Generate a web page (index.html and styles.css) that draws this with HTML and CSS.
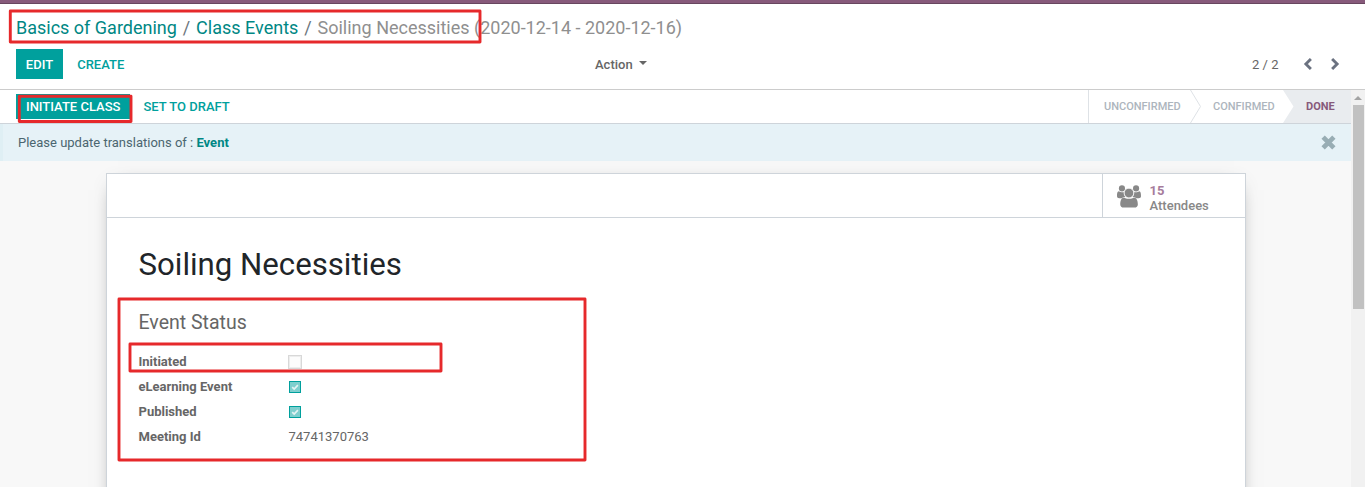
FILE: index.html
```html
<!DOCTYPE html>
<html lang="en">
<head>
<meta charset="utf-8">
<title>Soiling Necessities</title>
<link rel="stylesheet" href="styles.css">
</head>
<body>
<div class="app">
  <div class="navbar"></div>
  <header class="control-panel">
    <nav class="breadcrumb"><a>Basics of Gardening</a><span class="sep">/</span><a>Class Events</a><span class="sep">/</span><span class="current">Soiling Necessities (2020-12-14 - 2020-12-16)</span></nav>
    <div class="toolbar">
      <div class="toolbar-left"><button class="btn primary edit">EDIT</button><button class="btn link create">CREATE</button></div>
      <div class="action">Action<i class="caret"></i></div>
      <div class="pager">
        <span class="count">2 / 2</span>
        <svg class="chev" viewBox="0 0 10 12"><path d="M7.900 1 2.900 6l5 5" /></svg>
        <svg class="chev" viewBox="0 0 10 12"><path d="M2.100 1l5 5-5 5" /></svg>
      </div>
    </div>
  </header>
  <div class="content">
    <main class="form">
      <div class="statusbar">
        <div class="status-buttons"><button class="btn primary initiate">INITIATE CLASS</button><button class="btn link draft">SET TO DRAFT</button></div>
        <div class="steps">
          <div class="step first">UNCONFIRMED</div>
          <svg class="arrow" viewBox="0 0 11 33"><path class="line" d="M.5 0 10.500 16.500.5 33"/></svg>
          <div class="step second">CONFIRMED</div>
          <svg class="arrow" viewBox="0 0 11 33"><path class="fill" d="M0 0H11V33H0L10.500 16.500Z"/></svg>
          <div class="step done">DONE</div>
        </div>
      </div>
      <div class="alert"><span>Please update translations of : <b>Event</b></span>
        <svg class="close" viewBox="0 0 14 14"><path d="M2 2l10 10M12 2 2 12"/></svg>
      </div>
      <div class="sheet-bg">
        <section class="sheet">
          <div class="button-box">
            <div class="stat">
              <svg class="users" viewBox="0 0 24.300 23"><circle cx="5" cy="3.300" r="3.100"/><circle cx="19.300" cy="3.300" r="3.100"/><path d="M1.900 6.200C2.800 6.900 4 7.400 5.300 7.300c.6 0 1.100-.1 1.600-.3 0 1.800.6 3.500 1.400 4.900-1.300 0-2.600.4-3.500 1.300H2.300C.9 13.200 0 12.500 0 11.200 0 9.300.2 6.200 1.900 6.200ZM22.400 6.200c-.9.7-2.100 1.200-3.400 1.100-.6 0-1.100-.1-1.600-.3 0 1.800-.6 3.500-1.400 4.900 1.300 0 2.600.4 3.500 1.300H22c1.400 0 2.300-.7 2.300-2 0-1.900-.2-5-1.900-5Z"/><circle class="front" cx="12.100" cy="8" r="4.900"/><path d="M7.200 12.400c1 .8 2.500 1.500 4.900 1.500s4-.7 4.900-1.500c3.300 0 4.100 4.100 4.100 7.100 0 2.100-1.400 3.200-3.500 3.200H6.800c-2.200 0-3.500-1.100-3.500-3.200 0-3 .7-7.100 3.900-7.100Z"/></svg>
              <div class="stat-text"><span class="value">15</span><span>Attendees</span></div>
            </div>
          </div>
          <h1>Soiling Necessities</h1>
          <h2>Event Status</h2>
          <div class="fields">
            <label>Initiated</label><i class="check empty"></i>
            <label>eLearning Event</label><i class="check"><svg viewBox="0 0 10 10"><path d="M2.200 5.200 4.200 7.100 7.900 3.200"/></svg></i>
            <label>Published</label><i class="check"><svg viewBox="0 0 10 10"><path d="M2.200 5.200 4.200 7.100 7.900 3.200"/></svg></i>
            <label>Meeting Id</label><span>74741370763</span>
          </div>
        </section>
      </div>
    </main>
    <div class="scrollbar"><i class="up"></i><div class="thumb"></div></div>
  </div>
  <svg class="marks" viewBox="0 0 1365 487">
    <rect x="10.300" y="11" width="469.700" height="31"/>
    <rect x="19.300" y="96.300" width="111.700" height="25.200"/>
    <rect x="119" y="299" width="466" height="161"/>
    <rect x="130" y="344" width="311" height="27"/>
  </svg>
</div>
</body>
</html>
```
FILE: styles.css
```css
* { box-sizing: border-box; }
body { margin: 0; font: 13px/20px Roboto, sans-serif; color: #666; overflow: hidden; }
.app { position: relative; height: 487px; display: flex; flex-direction: column; background: #fff; overflow: hidden; }
.navbar { height: 4px; flex: none; background: #875a7b; border-bottom: 1px solid #68465f; }
.control-panel { height: 86px; flex: none; border-bottom: 1px solid #ccc; padding: 10px 16px 0; }
.breadcrumb { font-size: 18px; line-height: 27px; height: 27px; white-space: nowrap; }
.breadcrumb a { color: #008784; }
.sep { padding: 0 5.9px; color: #6c757d; }
.current { color: #8f8f8f; }
.toolbar { display: flex; align-items: center; height: 30px; margin-top: 8px; }
.toolbar-left { flex: 0 0 579px; display: flex; }
.btn { border: 0; margin: 0; font: 500 13px/20px Roboto, sans-serif; white-space: nowrap; text-align: center; }
.primary { background: #00a09d; color: #fff; }
.link { background: none; color: #00a09d; }
.edit { width: 47px; height: 30px; padding: 2px 0 0; }
.create { padding: 2px 0 0; margin-left: 14.2px; }
.action { flex: 1; display: flex; align-items: center; font-weight: 500; padding-top: 2px; }
.caret { border: 4px solid transparent; border-top-color: #666; border-bottom: 0; margin: -4px 0 0 6px; }
.pager { display: flex; align-items: center; margin-right: 9px; }
.count { margin-right: 24.5px; padding-top: 2px; }
.chev { width: 10px; height: 12px; fill: none; stroke: #6b7280; stroke-width: 2.9; }
.chev + .chev { margin-left: 17px; }
.content { flex: 1; display: flex; min-height: 0; }
.form { flex: 1; min-width: 0; display: flex; flex-direction: column; }
.statusbar { height: 34px; flex: none; display: flex; justify-content: space-between; border-bottom: 1px solid #ced4da; padding-left: 16px; }
.status-buttons { display: flex; align-items: center; }
.initiate { width: 114.4px; height: 25px; padding: 0; }
.draft { padding: 0; margin-left: 13px; }
.steps { display: flex; border-left: 1px solid #dee2e6; font-size: 11px; line-height: 33px; color: #adb5bd; font-weight: 500; }
.step { white-space: nowrap; }
.first { width: 101px; padding-left: 15px; }
.second { width: 82px; padding-left: 12px; }
.done { width: 57px; padding-left: 12px; background: #e9ecef; color: #875a7b; font-weight: 700; }
.arrow { width: 11px; height: 33px; flex: none; }
.line { fill: none; stroke: #dee2e6; }
.fill { fill: #e9ecef; }
.alert { height: 37px; flex: none; display: flex; align-items: center; justify-content: space-between; background: #e6f2f7; border-left: 3px solid #dfeff4; padding: 0 15.5px 0 15px; color: #4b6670; }
.alert b { color: #008784; }
.close { width: 15px; height: 15px; fill: none; stroke: #98adb4; stroke-width: 4.4; }
.sheet-bg { flex: 1; background: #f8f8f8; padding: 12px 105px 0 106px; min-height: 0; }
.sheet { height: 500px; background: #fff; border: 1px solid #ced4da; box-shadow: 0 5px 20px -12px rgba(0, 0, 0, .75); }
.button-box { height: 44px; border-bottom: 1px solid #ced4da; display: flex; justify-content: flex-end; }
.stat { width: 143px; border-left: 1px solid #ced4da; display: flex; align-items: center; padding-left: 14px; color: #888; font-weight: 500; line-height: 15px; }
.users { width: 24px; height: 23px; fill: #888; margin-top: 2px; }
.front { stroke: #fff; stroke-width: .8; }
.stat-text { display: flex; flex-direction: column; margin: 5px 0 0 8.5px; }
.value { color: #a67c9c; font-weight: 700; }
h1 { margin: 27px 0 0 31.5px; font-size: 31.2px; line-height: 40px; font-weight: 400; color: #212529; }
h2 { margin: 25px 0 0 31.5px; font-size: 19.5px; line-height: 26px; font-weight: 400; color: #666; }
.fields { display: grid; grid-template-columns: 150px 1fr; grid-auto-rows: 25px; align-items: center; margin: 13px 0 0 31.5px; }
.fields label { font-weight: 700; }
.check { width: 12px; height: 12px; background: #7fcfce; border: 1px solid #00a09d; }
.check svg { display: block; width: 10px; height: 10px; fill: none; stroke: #e5f3f3; stroke-width: 1.7; }
.empty { width: 14px; height: 14px; margin: 0 0 0 -1px; background: #fcfcfc; border: 1px solid #d8d8d8; box-shadow: inset 0 0 0 1px #ededed; }
.scrollbar { width: 14px; background: #f1f1f1; display: flex; flex-direction: column; align-items: center; }
.up { border: 4px solid transparent; border-bottom-color: #a3a3a3; border-top: 0; margin-top: 6px; }
.thumb { width: 11px; height: 204px; margin: 5px 0 0 1px; background: #c1c1c1; }
.marks { position: absolute; inset: 0; width: 1365px; height: 487px; fill: none; stroke: #e6292b; stroke-width: 2.9; stroke-linejoin: round; pointer-events: none; }
```
